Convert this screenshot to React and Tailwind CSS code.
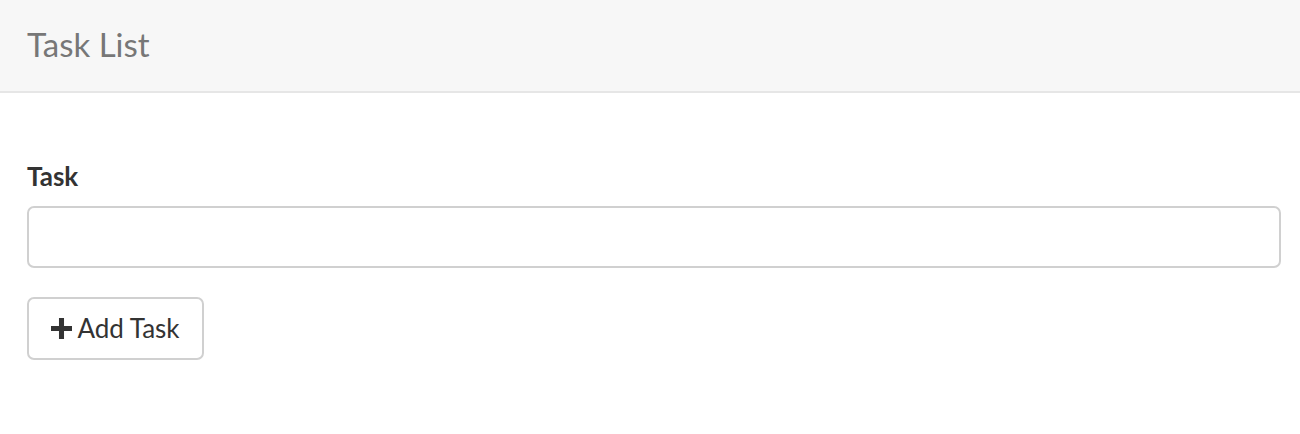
import React from "react";

export default function App() {
  return (
    <div className="w-[1300px] h-[434px] bg-white" style={{ fontFamily: "Lato, 'Open Sans', sans-serif" }}>
      <div className="h-[93px] bg-[#f7f7f7] border-b-2 border-[#e6e6e6] flex items-center px-[27px]">
        <h1 className="text-[33px] text-[#777777] font-normal leading-none -mt-[2px]">Task List</h1>
      </div>
      <div className="px-[27px] pt-[70px]">
        <label className="block text-[26px] font-bold text-[#333333] leading-none mb-[17px]">Task</label>
        <input className="block w-[1254px] h-[62px] border-2 border-[#d0d0d0] rounded-[7px] outline-none px-3" />
        <button className="mt-[29px] h-[63px] w-[177px] border-2 border-[#d0d0d0] rounded-[7px] bg-white flex items-center justify-center gap-[5px] text-[26px] text-[#333333]">
          <svg width="21" height="21" viewBox="0 0 20 20"><path d="M7.6 0h4.8v7.6H20v4.8h-7.6V20H7.6v-7.6H0V7.6h7.6z" fill="#333" /></svg>
          <span>Add Task</span>
        </button>
      </div>
    </div>
  );
}
